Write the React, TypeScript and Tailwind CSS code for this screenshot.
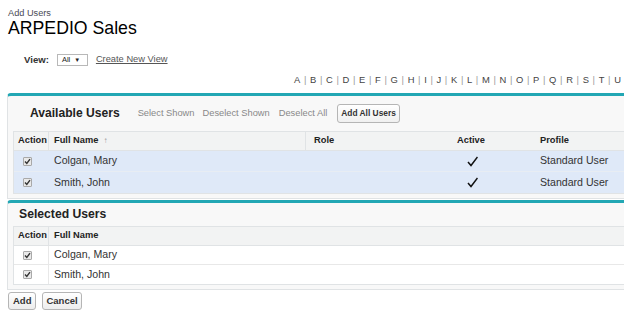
import React from "react";

const letters = "A B C D E F G H I J K L M N O P Q R S T U".split(" ");

function Box() {
  return (
    <span className="inline-flex w-[9px] h-[9px] items-center justify-center border border-[#a9a9a9] bg-[#e9e9e9] rounded-[1px]">
      <svg width="7" height="7" viewBox="0 0 7 7">
        <path d="M1 3.6 L2.8 5.5 L6 1.2" fill="none" stroke="#333" strokeWidth="1.4" />
      </svg>
    </span>
  );
}

function Check() {
  return (
    <svg width="11" height="11" viewBox="0 0 11 11">
      <path d="M1 6 L4 9.5 L10.5 1" fill="none" stroke="#111" strokeWidth="1.5" />
    </svg>
  );
}

export default function App() {
  const avail = ["Colgan, Mary", "Smith, John"];
  return (
    <div className="w-[624px] h-[317px] overflow-hidden bg-white text-[#222] font-['Liberation_Sans',Arial,sans-serif]">
      <div className="pl-[8px] pt-[8px]">
        <div className="text-[9.2px] leading-[10px] text-[#4a4a56]">Add Users</div>
        <div className="text-[17.7px] leading-[18px] text-black mt-[1px]">ARPEDIO Sales</div>
      </div>
      <div className="flex items-center h-[12px] mt-[17px] pl-[24px]">
        <span className="text-[9.6px] font-bold text-[#333]">View:</span>
        <span className="ml-[8px] w-[31px] h-[12px] border border-[#b8b8b8] flex items-center pl-[4px] text-[7.5px] text-[#222] leading-none">
          All <span className="ml-[4px] text-[6px]">▼</span>
        </span>
        <span className="ml-[8px] text-[9.3px] text-[#555] underline">Create New View</span>
      </div>
      <div className="mt-[8px] pl-[294px] whitespace-nowrap text-[9.4px] leading-[11px] text-[#444]">
        {letters.map((l, i) => (
          <span key={l}>
            {l}
            {i < letters.length - 1 && <span className="mx-[1.05px] text-[#999]"> | </span>}
          </span>
        ))}
      </div>
      {/* Available panel */}
      <div className="ml-[7px] mt-[8px] w-[760px] bg-[#f8f8f8] border-x border-b border-[#e0e3e5] border-t-[3px] border-t-[#22a7b4] rounded-t-[4px]">
        <div className="flex items-center h-[35px] pl-[22px]">
          <span className="text-[12.1px] font-bold text-[#222]">Available Users</span>
          <span className="ml-[18px] text-[9.3px] text-[#888]">Select Shown</span>
          <span className="ml-[8px] text-[9.3px] text-[#888]">Deselect Shown</span>
          <span className="ml-[9px] text-[9.3px] text-[#888]">Deselect All</span>
          <span className="ml-[10px] h-[19px] px-[3px] flex items-center border border-[#b5b5b5] rounded-[3px] bg-gradient-to-b from-white to-[#f0f0f0] text-[8.4px] font-bold text-[#333]">
            Add All Users
          </span>
        </div>
        <div className="ml-[5px] mb-[4px] border border-[#e0e3e5] bg-white">
          <div className="flex h-[19px] items-center bg-[#f2f3f3] border-b border-[#e0e3e5] text-[9.3px] font-bold text-[#222]">
            <div className="w-[35px] pl-[4px] h-full flex items-center border-r border-[#e0e3e5]">Action</div>
            <div className="w-[257px] pl-[5px] h-full flex items-center border-r border-[#e0e3e5]">
              Full Name <span className="ml-[5px] text-[8px] font-normal text-[#999]">↑</span>
            </div>
            <div className="w-[100px] pl-[8px] h-full flex items-center">Role</div>
            <div className="w-[130px] h-full flex items-center justify-center">Active</div>
            <div className="pl-[4px] h-full flex items-center">Profile</div>
          </div>
          {avail.map((n, i) => (
            <div
              key={n}
              className={`flex h-[21px] items-center bg-[#dfe9f8] text-[10.6px] text-[#333] ${i === 0 ? "border-b border-[#e8edf3]" : ""}`}
            >
              <div className="w-[35px] pl-[9px] h-full flex items-center">
                <Box />
              </div>
              <div className="w-[257px] pl-[5px]">{n}</div>
              <div className="w-[100px]" />
              <div className="w-[130px] flex justify-center pl-[2px]">
                <Check />
              </div>
              <div className="pl-[4px]">Standard User</div>
            </div>
          ))}
        </div>
      </div>
      {/* Selected panel */}
      <div className="ml-[7px] mt-[1px] w-[760px] bg-[#f8f8f8] border-x border-b border-[#e0e3e5] border-t-[3px] border-t-[#22a7b4] rounded-t-[4px]">
        <div className="flex items-center h-[23px] pl-[11px]">
          <span className="text-[12.2px] font-bold text-[#222]">Selected Users</span>
        </div>
        <div className="ml-[5px] mb-[4px] border-l border-y border-[#e0e3e5] bg-white">
          <div className="flex h-[19px] items-center bg-[#f2f3f3] border-b border-[#e0e3e5] text-[9.3px] font-bold text-[#222]">
            <div className="w-[35px] pl-[4px] h-full flex items-center border-r border-[#e0e3e5]">Action</div>
            <div className="pl-[5px]">Full Name</div>
          </div>
          {avail.map((n, i) => (
            <div
              key={n}
              className={`flex h-[19px] items-center text-[10.6px] text-[#333] ${i === 0 ? "border-b border-[#e8e8e8]" : ""}`}
            >
              <div className="w-[35px] pl-[9px] h-full flex items-center border-r border-[#e8e8e8]">
                <Box />
              </div>
              <div className="pl-[5px]">{n}</div>
            </div>
          ))}
        </div>
      </div>
      <div className="flex gap-[6px] pl-[8px] mt-[2px]">
        <span className="h-[18px] px-[4px] flex items-center border border-[#b5b5b5] rounded-[3px] bg-gradient-to-b from-white to-[#ededed] text-[9.5px] font-bold text-[#333]">
          Add
        </span>
        <span className="h-[18px] px-[3px] flex items-center border border-[#b5b5b5] rounded-[3px] bg-gradient-to-b from-white to-[#ededed] text-[9.5px] font-bold text-[#333]">
          Cancel
        </span>
      </div>
    </div>
  );
}
